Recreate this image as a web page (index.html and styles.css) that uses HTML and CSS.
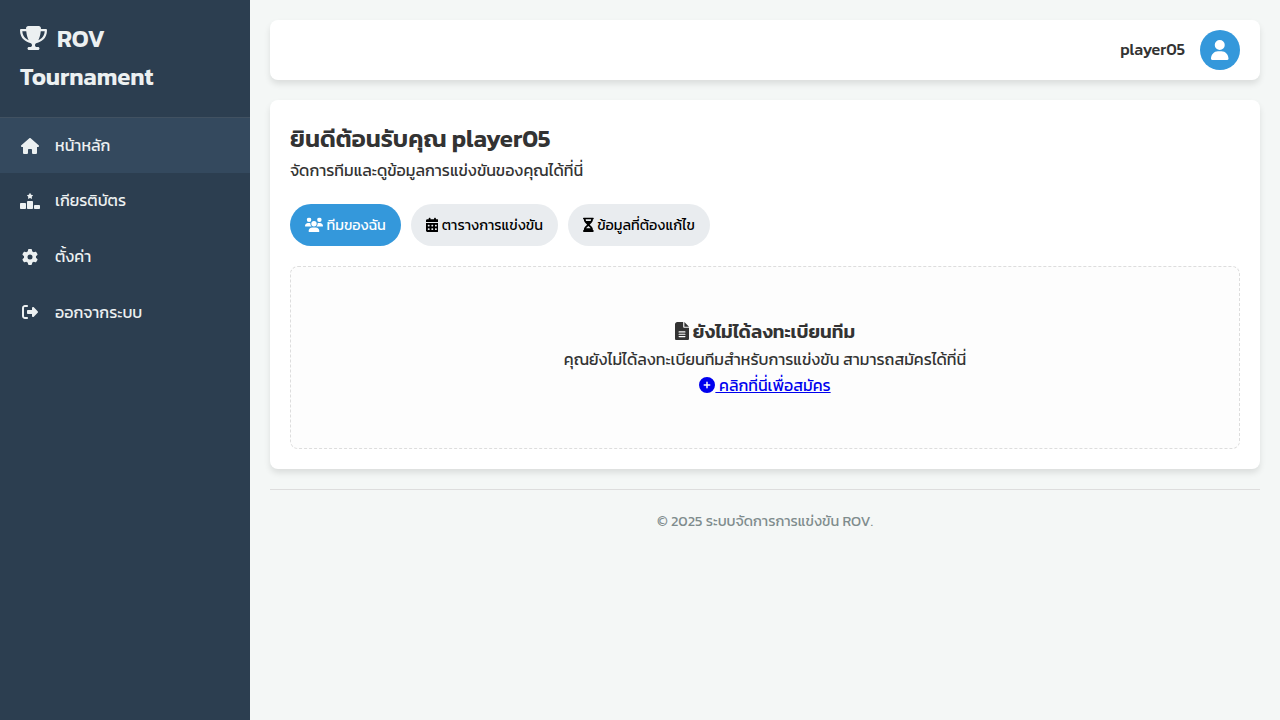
FILE: index.html
```html
<!DOCTYPE html>
<html lang="th">
<head>
<meta charset="utf-8">
<title>ROV Tournament</title>
<link rel="stylesheet" href="styles.css">
</head>
<body>
<aside class="sidebar">
  <h2 class="brand"><svg class="icon trophy" viewBox="0 0 576 512"><path d="M400 0H176c-26.5 0-48.1 21.8-47.1 48.2c.2 5.3 .4 10.6 .7 15.8H24C10.7 64 0 74.7 0 88c0 92.6 33.5 157 78.5 200.7c44.3 43.1 98.3 64.8 138.1 75.8c23.4 6.5 39.4 26 39.4 45.6c0 20.9-17 37.9-37.9 37.9H192c-17.7 0-32 14.3-32 32s14.3 32 32 32H384c17.7 0 32-14.3 32-32s-14.3-32-32-32H357.9C337 448 320 431 320 410.1c0-19.6 15.9-39.2 39.4-45.6c39.9-11 93.9-32.7 138.2-75.8C542.5 245 576 180.6 576 88c0-13.3-10.7-24-24-24H446.4c.3-5.2 .5-10.4 .7-15.8C448.1 21.8 426.5 0 400 0zM48.9 112h84.4c9.1 90.1 29.2 150.3 51.9 190.6c-24.9-11-50.8-26.5-73.2-48.3c-32-31.1-58-76-63-142.3zM464.1 254.3c-22.4 21.8-48.3 37.3-73.2 48.3c22.7-40.3 42.8-100.5 51.9-190.6h84.4c-5.1 66.3-31.1 111.2-63 142.3z"/></svg>ROV Tournament</h2>
  <nav class="menu">
    <a class="item active"><span class="slot"><svg class="icon" viewBox="0 0 576 512"><path d="M575.8 255.5c0 18-15 32.1-32 32.1h-32l.7 160.2c0 2.7-.2 5.4-.5 8.1V472c0 22.1-17.9 40-40 40H392c-22.1 0-40-17.9-40-40V384c0-17.7-14.3-32-32-32H256c-17.7 0-32 14.3-32 32v88c0 22.1-17.9 40-40 40H104c-22.1 0-40-17.9-40-40V287.6H32c-18 0-32-14-32-32.1c0-9 3-17 10-24L266.4 8c7-7 15-8 22-8s15 2 21 7L564.8 231.5c8 7 12 15 11 24z"/></svg></span>หน้าหลัก</a>
    <a class="item"><span class="slot"><svg class="icon" viewBox="0 0 640 512"><path d="M353.8 54.1L330.2 6.3c-3.9-8.3-16.1-8.6-20.4 0L286.2 54.1l-52.3 7.5c-9.3 1.4-13.3 12.9-6.4 19.8l38 37-9 52.1c-1.4 9.3 8.2 16.5 16.8 12.2l46.9-24.8 46.6 24.4c8.6 4.3 18.3-2.9 16.8-12.2l-9-52.1 38-36.6c6.8-6.8 2.9-18.3-6.4-19.8l-52.3-7.5zM256 256c-17.7 0-32 14.3-32 32V480c0 17.7 14.3 32 32 32H384c17.7 0 32-14.3 32-32V288c0-17.7-14.3-32-32-32H256zM32 320c-17.7 0-32 14.3-32 32V480c0 17.7 14.3 32 32 32H160c17.7 0 32-14.3 32-32V352c0-17.7-14.3-32-32-32H32zm416 96v64c0 17.7 14.3 32 32 32H608c17.7 0 32-14.3 32-32V416c0-17.7-14.3-32-32-32H480c-17.7 0-32 14.3-32 32z"/></svg></span>เกียรติบัตร</a>
    <a class="item"><span class="slot"><svg class="icon" viewBox="0 0 512 512"><path d="M495.9 166.6c3.2 8.7 .5 18.4-6.4 24.6l-43.3 39.4c1.1 8.3 1.7 16.8 1.7 25.4s-.6 17.1-1.7 25.4l43.3 39.4c6.9 6.2 9.6 15.9 6.4 24.6c-4.4 11.9-9.7 23.3-15.8 34.3l-4.7 8.1c-6.6 11-14 21.4-22.1 31.2c-5.9 7.2-15.7 9.6-24.5 6.8l-55.7-17.7c-13.4 10.3-28.2 18.9-44 25.4l-12.5 57.1c-2 9.1-9 16.3-18.2 17.8c-13.8 2.3-28 3.5-42.5 3.5s-28.7-1.2-42.5-3.5c-9.2-1.5-16.2-8.7-18.2-17.8l-12.5-57.1c-15.8-6.5-30.6-15.1-44-25.4L83.1 425.9c-8.8 2.8-18.6 .3-24.5-6.8c-8.1-9.8-15.5-20.2-22.1-31.2l-4.7-8.1c-6.1-11-11.4-22.4-15.8-34.3c-3.2-8.7-.5-18.4 6.4-24.6l43.3-39.4C64.6 273.1 64 264.6 64 256s.6-17.1 1.7-25.4L22.4 191.2c-6.9-6.2-9.6-15.9-6.4-24.6c4.4-11.9 9.7-23.3 15.8-34.3l4.7-8.1c6.6-11 14-21.4 22.1-31.2c5.9-7.2 15.7-9.6 24.5-6.8l55.7 17.7c13.4-10.3 28.2-18.9 44-25.4l12.5-57.1c2-9.1 9-16.3 18.2-17.8C227.3 1.2 241.5 0 256 0s28.7 1.2 42.5 3.5c9.2 1.5 16.2 8.7 18.2 17.8l12.5 57.1c15.8 6.5 30.6 15.1 44 25.4l55.7-17.7c8.8-2.8 18.6-.3 24.5 6.8c8.1 9.8 15.5 20.2 22.1 31.2l4.7 8.1c6.1 11 11.4 22.4 15.8 34.3zM256 336a80 80 0 1 0 0-160 80 80 0 1 0 0 160z"/></svg></span>ตั้งค่า</a>
    <a class="item"><span class="slot"><svg class="icon" viewBox="0 0 512 512"><path d="M377.9 105.9L500.7 228.7c7.2 7.2 11.3 17.1 11.3 27.3s-4.1 20.1-11.3 27.3L377.9 406.1c-6.4 6.4-15 9.9-24 9.9c-18.7 0-33.9-15.2-33.9-33.9l0-62.1-128 0c-17.7 0-32-14.3-32-32l0-64c0-17.7 14.3-32 32-32l128 0 0-62.1c0-18.7 15.2-33.9 33.9-33.9c9 0 17.6 3.6 24 9.9zM160 96L96 96c-17.7 0-32 14.3-32 32l0 256c0 17.7 14.3 32 32 32l64 0c17.7 0 32 14.3 32 32s-14.3 32-32 32l-64 0c-53 0-96-43-96-96L0 128C0 75 43 32 96 32l64 0c17.7 0 32 14.3 32 32s-14.3 32-32 32z"/></svg></span>ออกจากระบบ</a>
  </nav>
</aside>
<main class="main">
  <header class="topbar">
    <span class="user">player05</span>
    <span class="avatar"><svg class="icon" viewBox="0 0 448 512"><path d="M224 256A128 128 0 1 0 224 0a128 128 0 1 0 0 256zM178.300 288C79.800 288 0 378 0 476.500V482.300C0 498.700 13.300 512 29.700 512H418.300c16.400 0 29.700-13.300 29.700-29.700V476.500C448 378 368.200 288 269.700 288H178.300z"/></svg></span>
  </header>
  <section class="card">
    <h2 class="title">ยินดีต้อนรับคุณ player05</h2>
    <p>จัดการทีมและดูข้อมูลการแข่งขันของคุณได้ที่นี่</p>
    <div class="tabs">
      <button class="tab on"><svg class="icon" viewBox="0 0 640 512"><path d="M144 0a80 80 0 1 1 0 160A80 80 0 1 1 144 0zM512 0a80 80 0 1 1 0 160A80 80 0 1 1 512 0zM0 298.7C0 239.8 47.8 192 106.7 192h42.7c15.9 0 31 3.5 44.6 9.7c-1.3 7.2-1.9 14.7-1.9 22.3c0 38.2 16.8 72.5 43.3 96H21.3C9.6 320 0 310.4 0 298.7zM405.3 320h-.7c26.6-23.5 43.3-57.8 43.3-96c0-7.6-.7-15-1.9-22.3c13.6-6.3 28.7-9.7 44.6-9.7h42.7C592.2 192 640 239.8 640 298.7c0 11.8-9.6 21.3-21.3 21.3H405.3zM224 224a96 96 0 1 1 192 0 96 96 0 1 1 -192 0zM128 485.3C128 411.7 187.7 352 261.3 352H378.7C452.3 352 512 411.7 512 485.3c0 14.7-11.9 26.7-26.7 26.7H154.7c-14.7 0-26.7-11.9-26.7-26.7z"/></svg> ทีมของฉัน</button>
      <button class="tab"><svg class="icon" viewBox="0 0 448 512"><path fill-rule="evenodd" d="M128 0c17.7 0 32 14.3 32 32V64H288V32c0-17.7 14.3-32 32-32s32 14.3 32 32V64h48c26.5 0 48 21.5 48 48v48H0V112C0 85.5 21.5 64 48 64H96V32c0-17.7 14.3-32 32-32zM0 192H448V464c0 26.5-21.5 48-48 48H48c-26.5 0-48-21.5-48-48V192zM64 272v32c0 8.8 7.2 16 16 16h32c8.8 0 16-7.2 16-16V272c0-8.8-7.2-16-16-16H80c-8.8 0-16 7.2-16 16zm128 0v32c0 8.8 7.2 16 16 16h32c8.8 0 16-7.2 16-16V272c0-8.8-7.2-16-16-16H208c-8.8 0-16 7.2-16 16zm128 0v32c0 8.8 7.2 16 16 16h32c8.8 0 16-7.2 16-16V272c0-8.8-7.2-16-16-16H336c-8.8 0-16 7.2-16 16zM64 400v32c0 8.8 7.2 16 16 16h32c8.8 0 16-7.2 16-16V400c0-8.8-7.2-16-16-16H80c-8.8 0-16 7.2-16 16zm128 0v32c0 8.8 7.2 16 16 16h32c8.8 0 16-7.2 16-16V400c0-8.8-7.2-16-16-16H208c-8.8 0-16 7.2-16 16zm128 0v32c0 8.8 7.2 16 16 16h32c8.8 0 16-7.2 16-16V400c0-8.8-7.2-16-16-16H336c-8.8 0-16 7.2-16 16z"/></svg> ตารางการแข่งขัน</button>
      <button class="tab"><svg class="icon" viewBox="0 0 384 512"><path fill-rule="evenodd" d="M32 0C14.3 0 0 14.3 0 32S14.3 64 32 64V75c0 42.4 16.9 83.1 46.9 113.1L146.7 256 78.9 323.9C48.9 353.9 32 394.6 32 437v11c-17.7 0-32 14.3-32 32s14.3 32 32 32H352c17.7 0 32-14.3 32-32s-14.3-32-32-32V437c0-42.4-16.9-83.1-46.9-113.1L237.3 256l67.9-67.9c30-30 46.9-70.7 46.9-113.1V64c17.7 0 32-14.3 32-32s-14.3-32-32-32H32zM96 75V64H288V75c0 19-5.6 37.4-16 53H112c-10.3-15.6-16-34-16-53zm16 309c3.5-5.3 7.6-10.3 12.1-14.9L192 301.3l67.9 67.9c4.6 4.6 8.6 9.6 12.1 14.9H112z"/></svg> ข้อมูลที่ต้องแก้ไข</button>
    </div>
    <div class="empty">
      <h3 class="empty-title"><svg class="icon" viewBox="0 0 384 512"><path fill-rule="evenodd" d="M64 0C28.7 0 0 28.7 0 64V448c0 35.3 28.7 64 64 64H320c35.3 0 64-28.7 64-64V160H256c-17.7 0-32-14.3-32-32V0H64zM256 0V128H384L256 0zM112 256H272c8.8 0 16 7.2 16 16s-7.2 16-16 16H112c-8.8 0-16-7.2-16-16s7.2-16 16-16zm0 64H272c8.8 0 16 7.2 16 16s-7.2 16-16 16H112c-8.8 0-16-7.2-16-16s7.2-16 16-16zm0 64H272c8.8 0 16 7.2 16 16s-7.2 16-16 16H112c-8.8 0-16-7.2-16-16s7.2-16 16-16z"/></svg> ยังไม่ได้ลงทะเบียนทีม</h3>
      <p>คุณยังไม่ได้ลงทะเบียนทีมสำหรับการแข่งขัน สามารถสมัครได้ที่นี่</p>
      <p><a class="link" href="#"><svg class="icon" viewBox="0 0 512 512"><path fill-rule="evenodd" d="M256 512A256 256 0 1 0 256 0a256 256 0 1 0 0 512zM232 344V280H168c-13.3 0-24-10.7-24-24s10.7-24 24-24h64V168c0-13.3 10.7-24 24-24s24 10.7 24 24v64h64c13.3 0 24 10.7 24 24s-10.7 24-24 24H280v64c0 13.3-10.7 24-24 24s-24-10.7-24-24z"/></svg> คลิกที่นี่เพื่อสมัคร</a></p>
    </div>
  </section>
  <footer class="footer">© 2025 ระบบจัดการการแข่งขัน ROV.</footer>
</main>
</body>
</html>
```
FILE: styles.css
```css
* { box-sizing: border-box; margin: 0; padding: 0; }
body { display: flex; min-height: 100vh; background: #f4f7f6; color: #333; font-family: Kanit, "Noto Sans", sans-serif; font-size: 16px; line-height: 1.6; }
.icon { height: 1em; fill: currentColor; vertical-align: -0.125em; }
.sidebar { width: 250px; flex: none; background: #2c3e50; color: #ecf0f1; }
.brand { font-size: 24px; font-weight: 600; padding: 20px; border-bottom: 1px solid rgba(255,255,255,.1); }
.trophy { margin-right: 10px; }
.item { display: flex; align-items: center; padding: 15px 20px; gap: 15px; }
.item.active { background: #34495e; }
.slot { width: 20px; display: flex; justify-content: center; }
.main { flex: 1; padding: 20px; }
.topbar { display: flex; justify-content: flex-end; align-items: center; gap: 15px; height: 60px; padding: 0 20px; background: #fff; border-radius: 8px; box-shadow: 0 4px 6px rgba(0,0,0,.1); }
.user { font-weight: 500; }
.avatar { width: 40px; height: 40px; border-radius: 50%; background: #3498db; color: #fff; display: flex; align-items: center; justify-content: center; font-size: 20px; }
.card { margin-top: 20px; padding: 20px; background: #fff; border-radius: 8px; box-shadow: 0 4px 6px rgba(0,0,0,.1); }
.title { font-size: 24px; font-weight: 600; }
.tabs { display: flex; gap: 10px; margin: 20px 0; }
.tab { padding: 10px 15px; border: 0; border-radius: 30px; background: #e9ecef; color: #000; font-family: inherit; font-size: 14.4px; white-space: nowrap; }
.tab .icon { margin-right: .2px; transform: translateY(.5px); }
.tab.on { background: #3498db; color: #fff; }
.empty { padding: 50px 0; border: 1px dashed #ddd; border-radius: 8px; background: #fdfdfd; text-align: center; }
.empty-title { font-size: 18.72px; font-weight: 600; }
.link { color: #00e; }
.footer { margin-top: 20px; padding: 20px; border-top: 1px solid #ddd; text-align: center; font-size: 14.4px; color: #7f8c8d; }
```
